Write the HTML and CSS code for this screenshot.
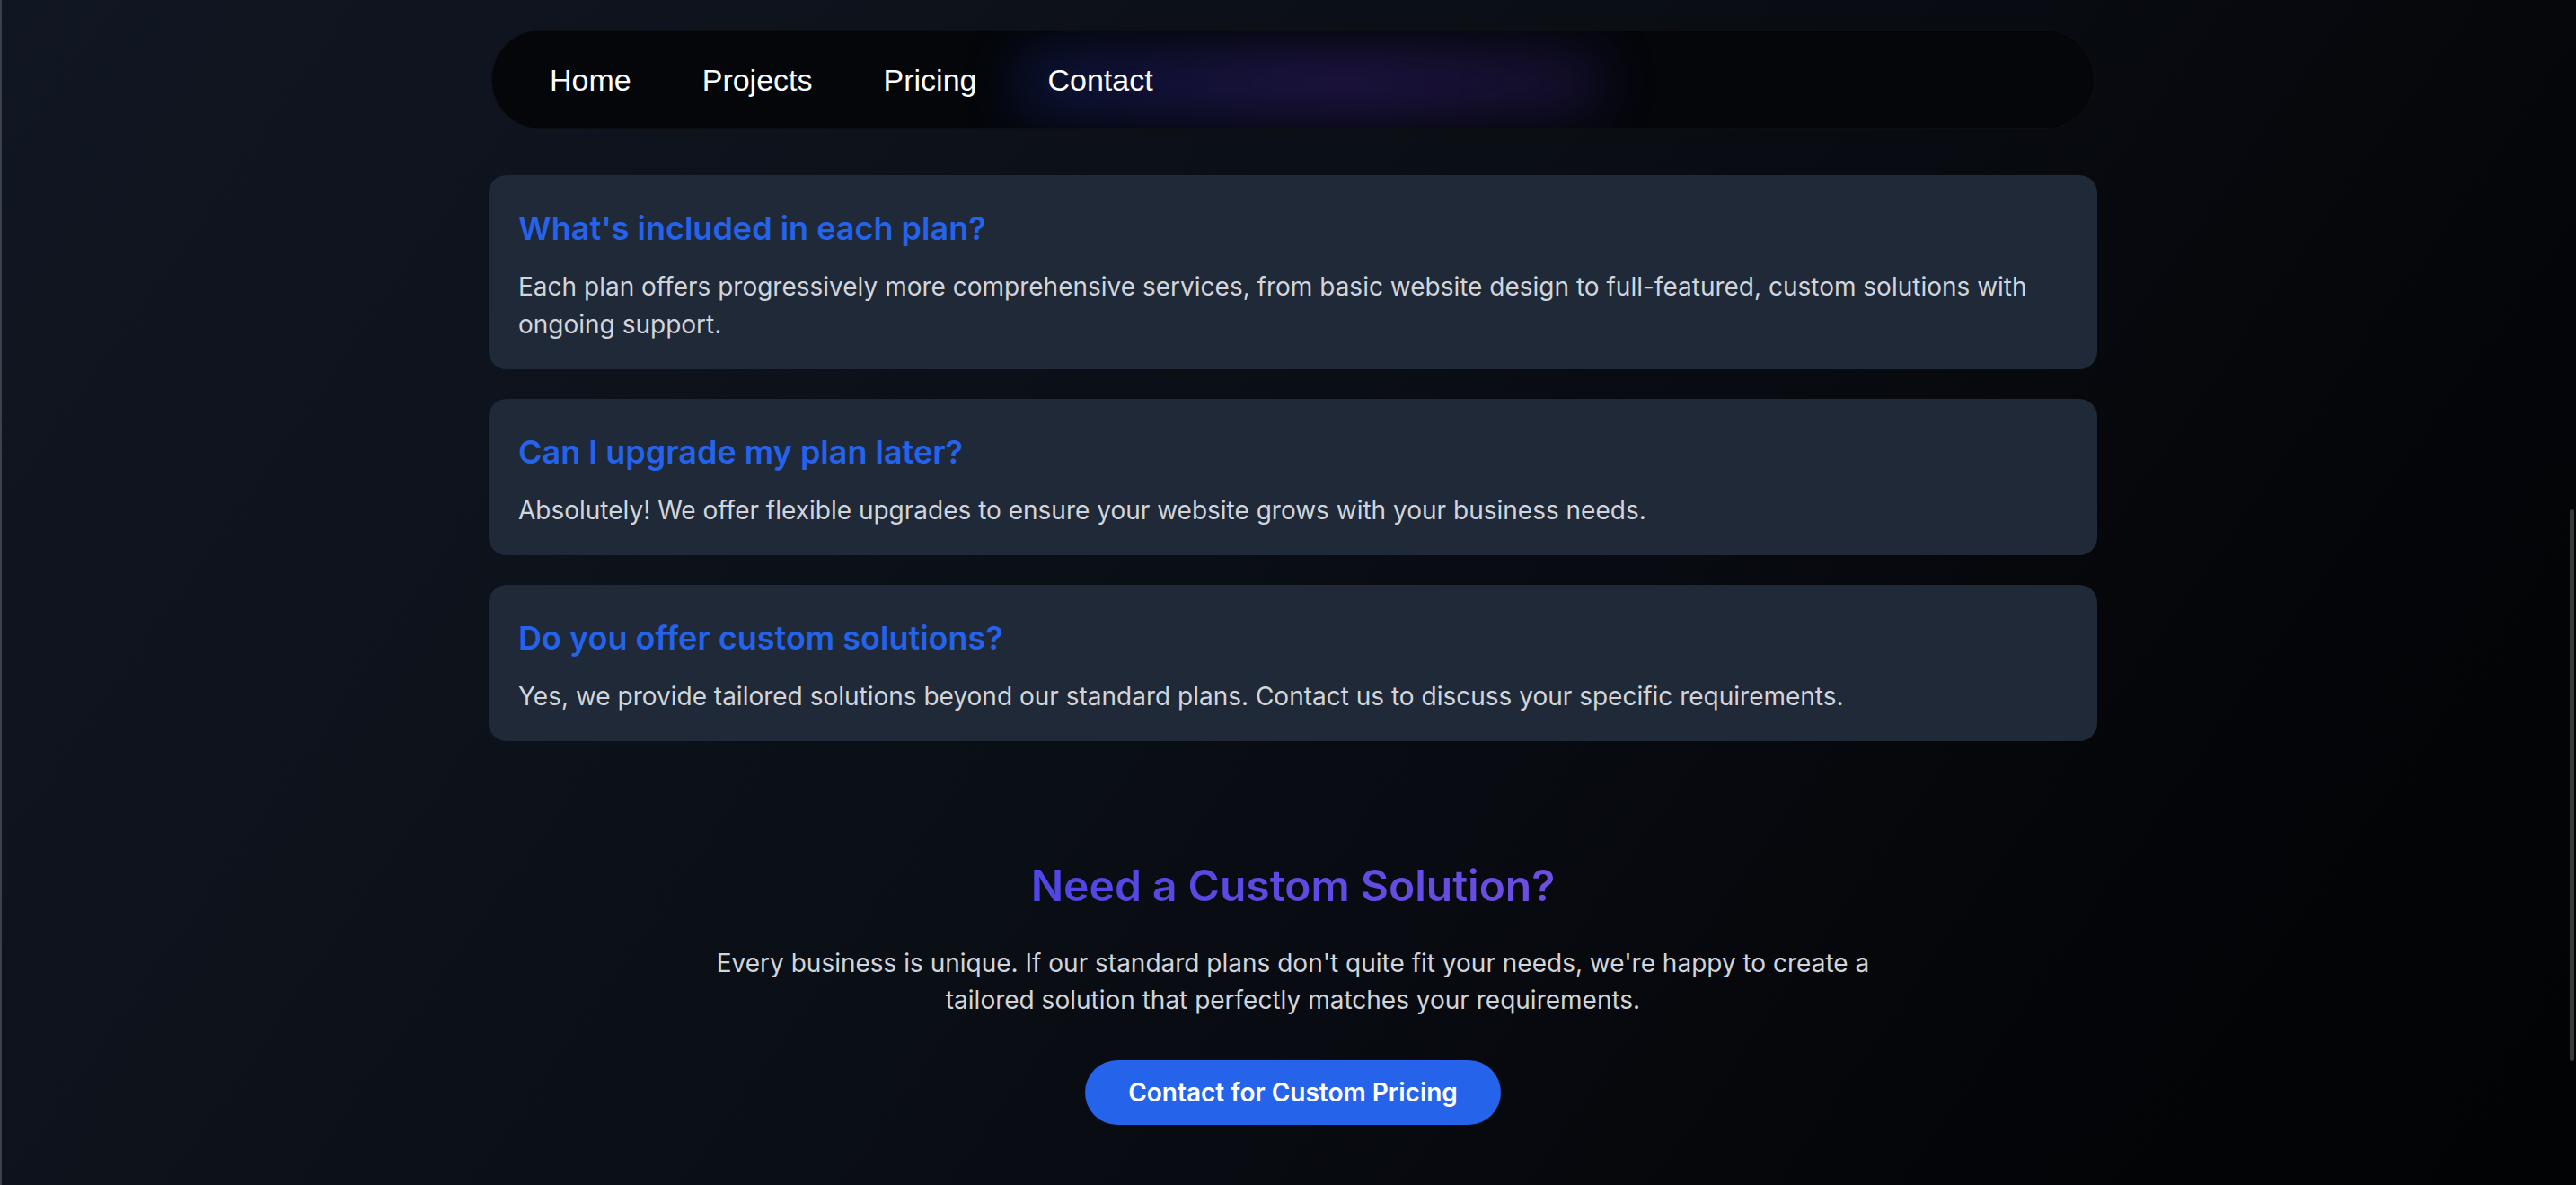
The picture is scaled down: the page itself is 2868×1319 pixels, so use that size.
FILE: index.html
```html
<!DOCTYPE html>
<html lang="en">
<head>
<meta charset="utf-8">
<title>Pricing</title>
<link rel="stylesheet" href="styles.css">
</head>
<body>
<div class="page">
  <nav class="nav">
    <span class="nav-glow"></span>
    <a class="nav-link" href="#">Home</a>
    <a class="nav-link" href="#">Projects</a>
    <a class="nav-link" href="#">Pricing</a>
    <a class="nav-link" href="#">Contact</a>
  </nav>

  <section class="faq">
    <div class="faq-card">
      <h3 class="faq-q">What's included in each plan?</h3>
      <p class="faq-a">Each plan offers progressively more comprehensive services, from basic website design to full-featured, custom solutions with ongoing support.</p>
    </div>
    <div class="faq-card">
      <h3 class="faq-q">Can I upgrade my plan later?</h3>
      <p class="faq-a">Absolutely! We offer flexible upgrades to ensure your website grows with your business needs.</p>
    </div>
    <div class="faq-card">
      <h3 class="faq-q">Do you offer custom solutions?</h3>
      <p class="faq-a">Yes, we provide tailored solutions beyond our standard plans. Contact us to discuss your specific requirements.</p>
    </div>
  </section>

  <section class="cta">
    <h2 class="cta-title">Need a Custom Solution?</h2>
    <p class="cta-text">Every business is unique. If our standard plans don't quite fit your needs, we're happy to create a tailored solution that perfectly matches your requirements.</p>
    <a class="cta-btn" href="#">Contact for Custom Pricing</a>
  </section>
</div>
<div class="scroll-thumb"></div>
</body>
</html>
```

FILE: styles.css
```css
html {
  margin: 0;
  padding: 0;
}

body {
  margin: 0;
  min-height: 1319px;
  box-sizing: border-box;
  padding-left: 9px;
  border-left: 2px solid #3b414c;
  background: linear-gradient(125deg, #111722 0%, #0c1119 35%, #080b11 60%, #040508 82%, #020304 100%);
  font-family: Inter, "Noto Sans", sans-serif;
  overflow: hidden;
}

.page {
  width: 1791px;
  margin: 0 auto;
  padding-top: 33px;
}

/* Navigation */
.nav {
  position: relative;
  box-sizing: border-box;
  width: 1785px;
  height: 111px;
  margin: 0 auto;
  padding-left: 64px;
  display: flex;
  align-items: center;
  gap: 79px;
  background: #04060a;
  border: 1px solid rgba(255, 255, 255, 0.035);
  border-radius: 56px;
  overflow: hidden;
}

.nav-glow {
  position: absolute;
  left: 580px;
  top: 20px;
  width: 660px;
  height: 76px;
  background: linear-gradient(90deg, rgba(37, 70, 235, 0.2), rgba(100, 60, 225, 0.28) 55%, rgba(100, 60, 225, 0.16));
  filter: blur(30px);
  border-radius: 40px;
}

.nav-link {
  position: relative;
  font-family: "Liberation Sans", Arial, sans-serif;
  font-size: 34px;
  color: #ffffff;
  text-decoration: none;
  line-height: 40px;
}

/* FAQ */
.faq {
  margin-top: 51px;
  display: flex;
  flex-direction: column;
  gap: 33px;
}

.faq-card {
  background: #1f2937;
  border-radius: 20px;
  padding: 34px 33px 29px;
}

.faq-q {
  margin: 0 0 19px;
  font-size: 36px;
  line-height: 50px;
  font-weight: 600;
  color: #2563eb;
}

.faq-a {
  margin: 0;
  font-size: 28px;
  line-height: 42px;
  color: #d1d5db;
}

/* Call to action */
.cta {
  margin-top: 131px;
  text-align: center;
}

.cta-title {
  display: inline-block;
  margin: 0;
  font-size: 48px;
  line-height: 60px;
  font-weight: 600;
  background: linear-gradient(90deg, #4f46e5, #6d4fe2);
  -webkit-background-clip: text;
  background-clip: text;
  color: transparent;
}

.cta-text {
  max-width: 1344px;
  margin: 36px auto 0;
  font-size: 28px;
  line-height: 41px;
  color: #d1d5db;
}

.cta-btn {
  display: inline-block;
  margin-top: 46px;
  height: 72px;
  padding: 0 48px;
  line-height: 72px;
  border-radius: 36px;
  background: #2563eb;
  color: #ffffff;
  font-size: 28px;
  font-weight: 600;
  text-decoration: none;
}

.scroll-thumb {
  position: fixed;
  right: 2px;
  top: 567px;
  width: 5px;
  height: 614px;
  background: #3a3a3c;
  border-radius: 3px;
}
```
